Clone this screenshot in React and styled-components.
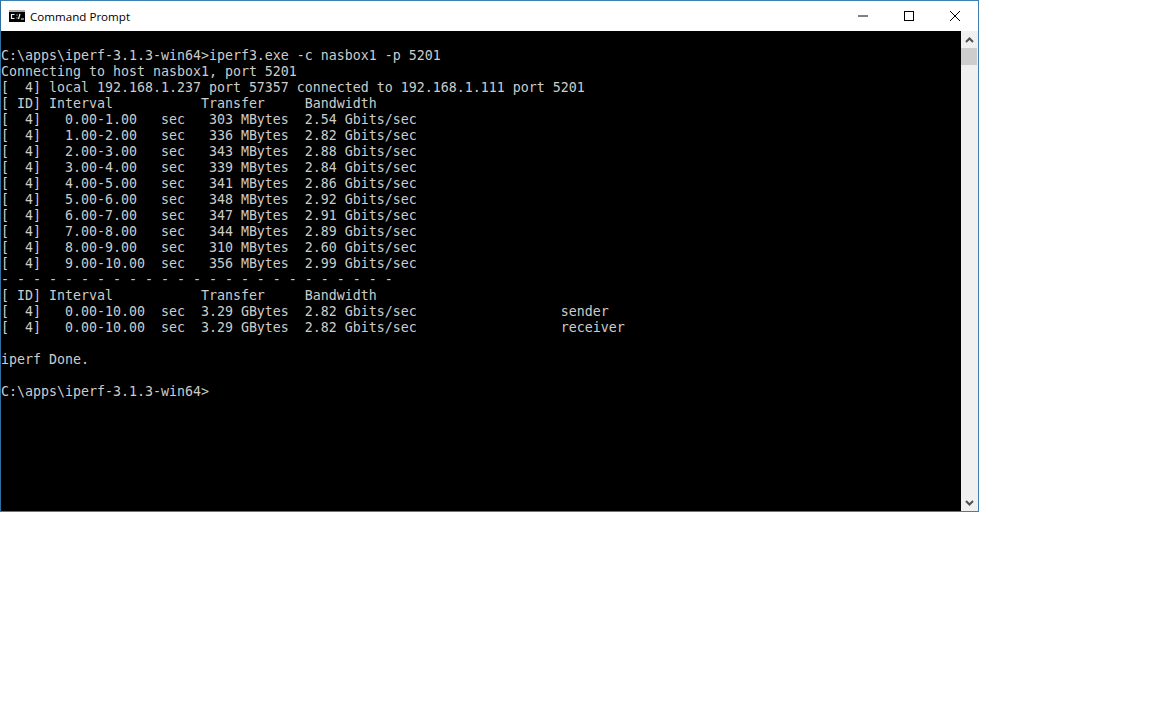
import React from 'react'
import styled, { createGlobalStyle } from 'styled-components'

const Global = createGlobalStyle`
    html, body {
        margin: 0;
        padding: 0;
        background: #fff;
    }
`

const Window = styled.div`
    width: 979px;
    height: 512px;
    box-sizing: border-box;
    border: 1px solid #3c7fb1;
    border-left-color: #2f6f9f;
    display: flex;
    flex-direction: column;
    background: #fff;
`

const TitleBar = styled.div`
    height: 30px;
    flex: none;
    display: flex;
    align-items: center;
    padding-left: 8px;
`

const TitleIcon = styled.svg`
    width: 16px;
    height: 12px;
    margin-right: 5px;
    flex: none;
`

const Title = styled.span`
    font-family: "Open Sans", "Noto Sans", sans-serif;
    font-size: 11.6px;
    color: #000;
    flex: 1;
`

const WinButton = styled.div`
    width: 46px;
    height: 30px;
    display: flex;
    align-items: center;
    justify-content: center;
`

const Body = styled.div`
    flex: 1;
    display: flex;
    min-height: 0;
`

const Console = styled.pre`
    flex: 1;
    margin: 0;
    padding: 17px 0 0 0;
    background: #000;
    color: #cccccc;
    font-family: "DejaVu Sans Mono", "Liberation Mono", monospace;
    font-size: 13.29px;
    line-height: 16px;
    overflow: hidden;
`

const Line = styled.div`
    height: 16px;
    white-space: pre;
`

const Scrollbar = styled.div`
    width: 17px;
    flex: none;
    background: #f0f0f0;
    display: flex;
    flex-direction: column;
`

const Arrow = styled.div`
    height: 17px;
    flex: none;
    display: flex;
    align-items: center;
    justify-content: center;
`

const Thumb = styled.div`
    height: 17px;
    flex: none;
    margin-right: 1px;
    background: #cdcdcd;
`

const Track = styled.div`
    flex: 1;
`

const lines = [
    'C:\\apps\\iperf-3.1.3-win64>iperf3.exe -c nasbox1 -p 5201',
    'Connecting to host nasbox1, port 5201',
    '[  4] local 192.168.1.237 port 57357 connected to 192.168.1.111 port 5201',
    '[ ID] Interval           Transfer     Bandwidth',
    '[  4]   0.00-1.00   sec   303 MBytes  2.54 Gbits/sec',
    '[  4]   1.00-2.00   sec   336 MBytes  2.82 Gbits/sec',
    '[  4]   2.00-3.00   sec   343 MBytes  2.88 Gbits/sec',
    '[  4]   3.00-4.00   sec   339 MBytes  2.84 Gbits/sec',
    '[  4]   4.00-5.00   sec   341 MBytes  2.86 Gbits/sec',
    '[  4]   5.00-6.00   sec   348 MBytes  2.92 Gbits/sec',
    '[  4]   6.00-7.00   sec   347 MBytes  2.91 Gbits/sec',
    '[  4]   7.00-8.00   sec   344 MBytes  2.89 Gbits/sec',
    '[  4]   8.00-9.00   sec   310 MBytes  2.60 Gbits/sec',
    '[  4]   9.00-10.00  sec   356 MBytes  2.99 Gbits/sec',
    '- - - - - - - - - - - - - - - - - - - - - - - - -',
    '[ ID] Interval           Transfer     Bandwidth',
    '[  4]   0.00-10.00  sec  3.29 GBytes  2.82 Gbits/sec                  sender',
    '[  4]   0.00-10.00  sec  3.29 GBytes  2.82 Gbits/sec                  receiver',
    '',
    'iperf Done.',
    '',
    'C:\\apps\\iperf-3.1.3-win64>',
]

const App = () => {
    return (
        <>
            <Global />
            <Window>
                <TitleBar>
                    <TitleIcon viewBox="0 0 16 12">
                        <rect x="0" y="0" width="16" height="12" fill="#000" />
                        <rect x="0" y="0" width="16" height="2" fill="#a8a8a8" />
                        <path d="M5.5 4.5H2.5v4h3M7.5 5h1M7.5 8h1M11 3.8L9.5 9M12 9h3" fill="none" stroke="#f4f4f4" strokeWidth="1.2" />
                    </TitleIcon>
                    <Title>Command Prompt</Title>
                    <WinButton>
                        <svg width="10" height="10" viewBox="0 0 10 10">
                            <path d="M0 5h10" stroke="#000" strokeWidth="1" />
                        </svg>
                    </WinButton>
                    <WinButton>
                        <svg width="10" height="10" viewBox="0 0 10 10">
                            <rect x="0.5" y="0.5" width="9" height="9" fill="none" stroke="#000" strokeWidth="1" />
                        </svg>
                    </WinButton>
                    <WinButton>
                        <svg width="10" height="10" viewBox="0 0 10 10">
                            <path d="M0 0l10 10M10 0L0 10" stroke="#000" strokeWidth="1" />
                        </svg>
                    </WinButton>
                </TitleBar>
                <Body>
                    <Console>
                        {lines.map((line, i) => (
                            <Line key={i}>{line}</Line>
                        ))}
                    </Console>
                    <Scrollbar>
                        <Arrow>
                            <svg width="9" height="6" viewBox="0 0 9 6">
                                <path d="M1 5l3.5-3.5L8 5" fill="none" stroke="#505050" strokeWidth="2" />
                            </svg>
                        </Arrow>
                        <Thumb />
                        <Track />
                        <Arrow>
                            <svg width="9" height="6" viewBox="0 0 9 6">
                                <path d="M1 1l3.5 3.5L8 1" fill="none" stroke="#505050" strokeWidth="2" />
                            </svg>
                        </Arrow>
                    </Scrollbar>
                </Body>
            </Window>
        </>
    )
}

export default App
